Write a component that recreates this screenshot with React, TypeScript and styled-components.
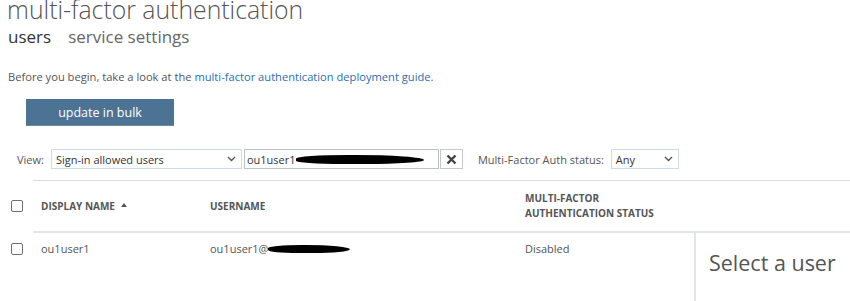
import React from "react";
import styled, { createGlobalStyle } from "styled-components";

const Global = createGlobalStyle`
  html, body { margin: 0; padding: 0; background: #fff; }
  body { font-family: "Open Sans", "Noto Sans", sans-serif; color: #505050; overflow: hidden; }
  * { box-sizing: border-box; }
`;

const Page = styled.div`
  width: 850px;
  height: 301px;
  overflow: hidden;
  display: flex;
  flex-direction: column;
`;

const Title = styled.h1`
  margin: -3px 0 0 7px;
  font-size: 24.8px;
  font-weight: 300;
  line-height: 24px;
  color: #555;
  white-space: nowrap;
`;

const Tabs = styled.div`
  display: flex;
  gap: 17px;
  margin: 6px 0 0 8px;
  height: 20px;
`;

const Tab = styled.span<{ $active?: boolean }>`
  font-size: 17px;
  line-height: 20px;
  color: ${(p) => (p.$active ? "#333" : "#666")};
`;

const Intro = styled.p`
  margin: 22px 0 0 8px;
  font-size: 11.15px;
  line-height: 16px;
  color: #555;
  white-space: nowrap;
`;

const Link = styled.a`
  color: #2a6fad;
  text-decoration: none;
`;

const BulkButton = styled.button`
  display: block;
  margin: 14px 0 0 26px;
  width: 148px;
  height: 27px;
  border: none;
  border-bottom: 1px solid #6b8aa6;
  background: #4d7394;
  color: #fff;
  font-family: inherit;
  font-size: 12.5px;
  padding: 0;
`;

const FilterRow = styled.div`
  display: flex;
  align-items: center;
  height: 20px;
  margin: 23px 0 0 17px;
`;

const Label = styled.span`
  font-size: 11px;
  color: #555;
  white-space: nowrap;
  margin-right: 7px;
`;

const SelectBox = styled.div<{ $w: number }>`
  width: ${(p) => p.$w}px;
  height: 20px;
  border: 1px solid #cddbe8;
  display: flex;
  align-items: center;
  justify-content: space-between;
  padding: 0 5px 0 4px;
  font-size: 11px;
  color: #333;
`;

const SearchBox = styled.div`
  margin-left: 2px;
  width: 195px;
  height: 20px;
  border: 1px solid #b9c3cc;
  display: flex;
  align-items: center;
  padding-left: 2px;
  font-size: 11px;
  color: #333;
`;

const ClearButton = styled.div`
  margin-left: 1px;
  width: 23px;
  height: 20px;
  border: 1px solid #c8c8c8;
  display: flex;
  align-items: center;
  justify-content: center;
  margin-right: 15px;
`;

const Redaction = styled.span<{ $w: number; $h: number }>`
  display: inline-block;
  width: ${(p) => p.$w}px;
  height: ${(p) => p.$h}px;
  background: #000;
  border-radius: 45% 60% 50% 40%;
  vertical-align: middle;
`;

const Table = styled.div`
  margin-top: 11px;
  display: flex;
  flex-direction: column;
  flex: 1;
`;

const HeaderRow = styled.div`
  display: grid;
  grid-template-columns: 33px 169px 315px 1fr;
  height: 50px;
  align-items: center;
`;

const RuleTop = styled.div`
  height: 1px;
  margin-left: 33px;
  background: #d7dde3;
`;

const RuleBottom = styled.div`
  height: 2px;
  margin-left: 33px;
  background: #e2e6ea;
`;

const CheckCell = styled.div`
  display: flex;
  justify-content: flex-start;
  padding-left: 11px;
`;

const Checkbox = styled.span`
  display: block;
  width: 12px;
  height: 12px;
  border: 1px solid #6e6e6e;
  border-radius: 2px;
  background: #fff;
`;

const HeadCell = styled.div`
  font-size: 10px;
  font-weight: 700;
  color: #555;
  line-height: 15px;
  padding-left: 8px;
  display: flex;
  align-items: center;
  gap: 6px;
`;

const SortArrow = styled.span`
  display: inline-block;
  width: 0;
  height: 0;
  border-left: 3.5px solid transparent;
  border-right: 3.5px solid transparent;
  border-bottom: 4px solid #555;
  margin-top: -2px;
`;

const Body = styled.div`
  display: flex;
  flex: 1;
`;

const Rows = styled.div`
  width: 694px;
`;

const DataRow = styled.div`
  display: grid;
  grid-template-columns: 33px 169px 315px 1fr;
  align-items: center;
  height: 31px;
`;

const Cell = styled.div`
  font-size: 11px;
  color: #555;
  padding-left: 8px;
  white-space: nowrap;
  display: flex;
  align-items: center;
`;

const DetailPanel = styled.div`
  flex: 1;
  border-left: 2px solid #e2e6ea;
  padding: 17px 0 0 13px;
  font-size: 21.5px;
  line-height: 26px;
  font-weight: 400;
  color: #555;
  white-space: nowrap;
`;

const Chevron = () => (
  <svg width="9" height="6" viewBox="0 0 9 6">
    <polyline points="1,1 4.5,4.5 8,1" fill="none" stroke="#555" strokeWidth="1.4" />
  </svg>
);

const CloseIcon = () => (
  <svg width="11" height="11" viewBox="0 0 11 11">
    <path d="M1.5 1.5 L9.5 9.5 M9.5 1.5 L1.5 9.5" stroke="#444" strokeWidth="2.4" />
  </svg>
);

export default function App() {
  return (
    <Page>
      <Global />
      <Title>multi-factor authentication</Title>
      <Tabs>
        <Tab $active>users</Tab>
        <Tab>service settings</Tab>
      </Tabs>
      <Intro>
        Before you begin, take a look at the{" "}
        <Link href="#">multi-factor authentication deployment guide.</Link>
      </Intro>
      <BulkButton>update in bulk</BulkButton>
      <FilterRow>
        <Label>View:</Label>
        <SelectBox $w={191}>
          <span>Sign-in allowed users</span>
          <Chevron />
        </SelectBox>
        <SearchBox>
          <span>ou1user1</span>
          <Redaction $w={128} $h={9} />
        </SearchBox>
        <ClearButton>
          <CloseIcon />
        </ClearButton>
        <Label>Multi-Factor Auth status:</Label>
        <SelectBox $w={68}>
          <span>Any</span>
          <Chevron />
        </SelectBox>
      </FilterRow>
      <Table>
        <RuleTop />
        <HeaderRow>
          <CheckCell>
            <Checkbox />
          </CheckCell>
          <HeadCell>
            DISPLAY NAME <SortArrow />
          </HeadCell>
          <HeadCell>USERNAME</HeadCell>
          <HeadCell>
            MULTI-FACTOR
            <br />
            AUTHENTICATION STATUS
          </HeadCell>
        </HeaderRow>
        <RuleBottom />
        <Body>
          <Rows>
            <DataRow>
              <CheckCell>
                <Checkbox />
              </CheckCell>
              <Cell>ou1user1</Cell>
              <Cell>
                ou1user1@
                <Redaction $w={82} $h={8} />
              </Cell>
              <Cell>Disabled</Cell>
            </DataRow>
          </Rows>
          <DetailPanel>Select a user</DetailPanel>
        </Body>
      </Table>
    </Page>
  );
}
